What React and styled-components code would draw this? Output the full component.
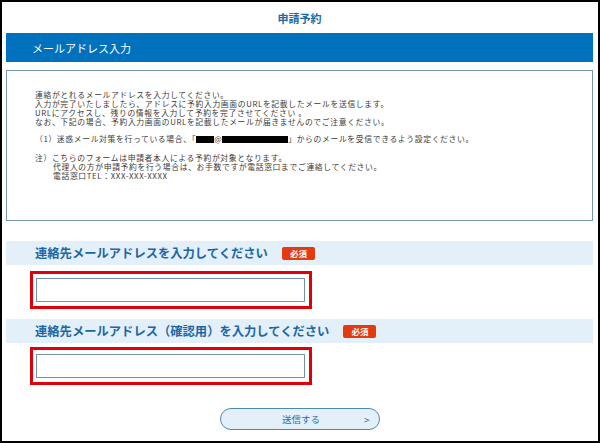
import React from "react"
import styled, { createGlobalStyle } from "styled-components"

const GlobalStyle = createGlobalStyle`
  html, body {
    margin: 0;
    padding: 0;
    background: #fff;
  }
  * {
    box-sizing: border-box;
  }
`

const jp = `"Noto Sans CJK JP", "Noto Sans", "DejaVu Sans", sans-serif`

const Frame = styled.div`
  width: 600px;
  height: 443px;
  border: 2px solid #000;
  padding: 0 5px 0 4px;
  font-family: ${jp};
  background: #fff;
  overflow: hidden;
`

const PageTitle = styled.h1`
  margin: 0;
  height: 31px;
  display: flex;
  align-items: center;
  justify-content: center;
  font-size: 11px;
  font-weight: 700;
  color: #1d69a6;
`

const SectionBar = styled.div`
  height: 29px;
  background: #0071bc;
  color: #fff;
  font-size: 11px;
  display: flex;
  align-items: center;
  padding-left: 26px;
`

const InfoBox = styled.div`
  margin-top: 8px;
  height: 151px;
  border: 1px solid #7396b0;
  padding: 20px 20px 0 28px;
  font-size: 7.8px;
  letter-spacing: 0.65px;
  line-height: 8.9px;
  color: #3a3a3a;
`

const Para = styled.p`
  margin: 0 0 ${(p) => p.$gap ?? 9}px;
  padding-left: ${(p) => (p.$indent ? "18px" : "0")};
  white-space: nowrap;
`

const Redact = styled.span`
  display: inline-block;
  width: ${(p) => p.$w}px;
  height: 7px;
  background: #000;
  vertical-align: -1px;
`

const FieldLabel = styled.div`
  margin-top: ${(p) => p.$top}px;
  height: 24px;
  background: #e4f0f9;
  display: flex;
  align-items: center;
  padding-left: 29px;
  font-size: 12.3px;
  font-weight: 700;
  color: #1c67a3;
`

const Required = styled.span`
  margin-left: 14px;
  background: #e5390f;
  color: #fff;
  font-size: 8.5px;
  font-weight: 700;
  line-height: 13px;
  padding: 0 8px;
  border-radius: 2px;
`

const HighlightBox = styled.div`
  margin: ${(p) => p.$top}px 0 0 24px;
  width: 282px;
  height: 38px;
  border: 3px solid #e0000b;
  padding: 4px 4px 4px 3px;
`

const TextInput = styled.input`
  display: block;
  width: 100%;
  height: 100%;
  border: 1px solid #6f93ad;
  margin: 0;
  padding: 0 4px;
  font-family: ${jp};
  background: #fff;
  outline: none;
`

const Actions = styled.div`
  display: flex;
  justify-content: center;
  margin-top: 23px;
`

const SubmitButton = styled.button`
  width: 160px;
  height: 22px;
  border: 1px solid #4f88b2;
  border-radius: 11px;
  background: #e3f0fa;
  display: grid;
  grid-template-columns: 1fr auto 1fr;
  align-items: center;
  padding: 0 9px 0 12px;
  font-family: ${jp};
  font-size: 9.5px;
  color: #2a6b9c;
  cursor: pointer;
`

const Arrow = styled.span`
  justify-self: end;
  font-size: 10px;
  color: #3d6f95;
`

export default function App() {
  return (
    <>
      <GlobalStyle />
      <Frame>
        <PageTitle>申請予約</PageTitle>
        <SectionBar>メールアドレス入力</SectionBar>
        <InfoBox>
          <Para $gap={0}>連絡がとれるメールアドレスを入力してください。</Para>
          <Para $gap={0}>
            入力が完了いたしましたら、アドレスに予約入力画面のURLを記載したメールを送信します。
          </Para>
          <Para $gap={0}>
            URLにアクセスし、残りの情報を入力して予約を完了させてください 。
          </Para>
          <Para $gap={8.7}>
            なお、下記の場合、予約入力画面のURLを記載したメールが届きませんのでご注意ください。
          </Para>
          <Para $gap={9.5}>
            （1）迷惑メール対策を行っている場合、「<Redact $w={18} />@
            <Redact $w={66} />」からのメールを受信できるよう設定ください。
          </Para>
          <Para $gap={0}>注）こちらのフォームは申請者本人による予約が対象となります。</Para>
          <Para $gap={0} $indent>
            代理人の方が申請予約を行う場合は、お手数ですが電話窓口までご連絡してください。
          </Para>
          <Para $gap={0} $indent>
            電話窓口TEL：XXX-XXX-XXXX
          </Para>
        </InfoBox>

        <FieldLabel $top={20}>
          連絡先メールアドレスを入力してください
          <Required>必須</Required>
        </FieldLabel>
        <HighlightBox $top={6}>
          <TextInput type="text" />
        </HighlightBox>

        <FieldLabel $top={10}>
          連絡先メールアドレス（確認用）を入力してください
          <Required>必須</Required>
        </FieldLabel>
        <HighlightBox $top={4}>
          <TextInput type="text" />
        </HighlightBox>

        <Actions>
          <SubmitButton type="button">
            <span />
            <span>送信する</span>
            <Arrow>&gt;</Arrow>
          </SubmitButton>
        </Actions>
      </Frame>
    </>
  )
}
